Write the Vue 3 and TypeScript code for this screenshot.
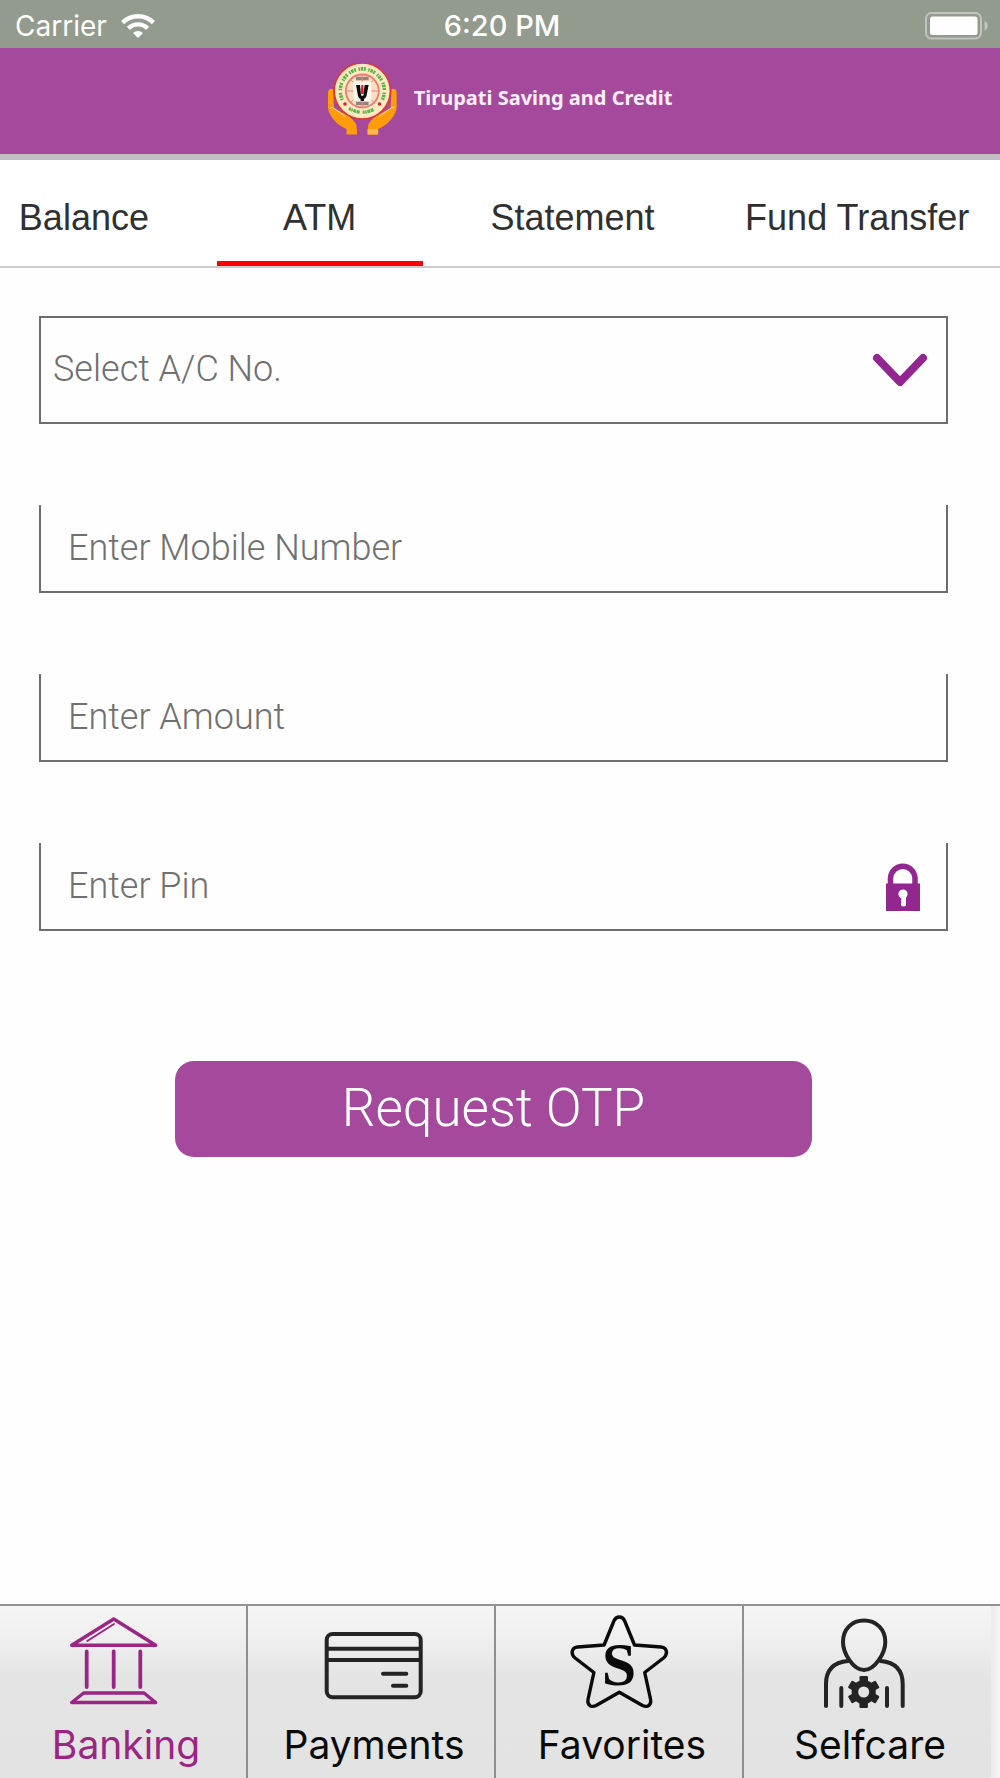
<script setup lang="ts">
import { ref } from 'vue'

type IconName = 'bank' | 'card' | 'star' | 'person'

interface NavItem {
  label: string
  icon: IconName
}

const tabs: string[] = ['Balance', 'ATM', 'Statement', 'Fund Transfer']
const activeTab = ref('ATM')

const navItems: NavItem[] = [
  { label: 'Banking', icon: 'bank' },
  { label: 'Payments', icon: 'card' },
  { label: 'Favorites', icon: 'star' },
  { label: 'Selfcare', icon: 'person' },
]
const activeNav = ref('Banking')

const account = ref('')
const mobile = ref('')
const amount = ref('')
const pin = ref('')

const gearTeeth: number[] = [0, 60, 120, 180, 240, 300]
</script>

<template>
  <div class="page">
    <div class="status">
      <div class="carrier">
        <span>Carrier</span>
        <svg width="34" height="24" viewBox="0 0 34 24" aria-hidden="true">
          <g fill="none" stroke="#fff" stroke-width="4.4">
            <path d="M1.6 8.6A21.8 21.8 0 0 1 32.4 8.6" />
            <path d="M7.4 14.4A13.5 13.5 0 0 1 26.6 14.4" />
          </g>
          <path d="M12 19A7 7 0 0 1 22 19L17 24Z" fill="#fff" />
        </svg>
      </div>
      <span class="time">6:20 PM</span>
      <svg class="battery" width="64" height="28" viewBox="0 0 64 28" aria-hidden="true">
        <rect x="1" y="1" width="55" height="25.5" rx="5.5" fill="none" stroke="#c0c4bd" stroke-width="2" />
        <rect x="5" y="4.5" width="47.5" height="18.5" rx="2.5" fill="#fff" />
        <path d="M59.5 9Q62.8 10.5 62.8 13.7Q62.8 17 59.5 18.5Z" fill="#c0c4bd" />
      </svg>
    </div>

    <header class="header">
      <svg width="70" height="72" viewBox="0 0 70 72" aria-hidden="true">
        <g fill="#ff9c0a">
          <path d="M0 29Q1 25 5 26L6 45L15 50Q25 55 28 61Q29 64 29 71.5H18.5V66Q11 63 6 57Q0 50 0 44Z" />
          <path d="M68.6 29Q67.6 25 63.6 26L62.6 45L53.6 50Q43.6 55 40.6 61Q39.6 64 39.6 71.5H50.1V66Q57.6 63 62.6 57Q68.6 50 68.6 44Z" />
        </g>
        <rect x="39.6" y="66" width="10.5" height="5.5" fill="#ffb64f" />
        <g fill="none" stroke="#ffd9a0" stroke-width="1">
          <path d="M2 45Q4 43 7 46L18 54" />
          <path d="M66.6 45Q64.6 43 61.6 46L50.6 54" />
        </g>
        <circle cx="34.3" cy="28" r="28" fill="#fce9c4" stroke="#e0382c" stroke-width="1.5" />
        <path
          d="M14.3 37A22 22 0 1 1 54.3 37"
          fill="none"
          stroke="#5cb548"
          stroke-width="3.6"
          stroke-dasharray="1.5 .8 2.5 .7 2 2.5"
        />
        <path d="M21 45.5Q34 53 47.5 45.5" fill="none" stroke="#5cb548" stroke-width="3.2" stroke-dasharray="2 .6 1.5 .6 3 .6 3 3" />
        <circle cx="17" cy="41" r="1.8" fill="#d8281f" />
        <circle cx="51.5" cy="41" r="1.8" fill="#d8281f" />
        <circle cx="34.3" cy="28" r="16.5" fill="#f9dfc0" stroke="#ee7b70" stroke-width="1.8" />
        <path d="M28 15.5H40.6M28 40.5H40.6" stroke="#8d8580" stroke-width="3.5" />
        <path d="M34.3 11V45M17 28H52M22 16L46.6 40M46.6 16L22 40" stroke="#ef8478" stroke-width="1" />
        <rect x="25.3" y="18.5" width="18" height="19.5" fill="#fff8ec" />
        <path d="M28 22H32L33 32Q34.3 34 35.6 32L36.6 22H40.6L38.5 33Q37 36 36 36V38H32.6V36Q31 36 30 33Z" fill="#0a0a0a" />
        <path d="M33.3 22H35.3L36 31H32.6Z" fill="#e8231d" />
      </svg>
      <span class="title">Tirupati Saving and Credit</span>
    </header>

    <nav class="tabs" aria-label="Banking services">
      <a
        v-for="tab in tabs"
        :key="tab"
        href="#"
        :class="['tab', { active: tab === activeTab }]"
        @click.prevent="activeTab = tab"
      >{{ tab }}</a>
    </nav>

    <form class="form" @submit.prevent>
      <div class="field">
        <select v-model="account" class="account" aria-label="Select A/C No.">
          <option value="">Select A/C No.</option>
        </select>
        <svg class="chevron" width="56" height="34" viewBox="0 0 56 34" aria-hidden="true">
          <path d="M5 5L28 29L51 5" fill="none" stroke="#92278f" stroke-width="8" stroke-linecap="round" stroke-linejoin="round" />
        </svg>
      </div>
      <div class="field">
        <input v-model="mobile" class="entry" type="tel" placeholder="Enter Mobile Number" aria-label="Enter Mobile Number" />
      </div>
      <div class="field">
        <input v-model="amount" class="entry" type="text" placeholder="Enter Amount" aria-label="Enter Amount" />
      </div>
      <div class="field">
        <input v-model="pin" class="entry" type="password" placeholder="Enter Pin" aria-label="Enter Pin" />
        <svg class="lock" width="34" height="50" viewBox="0 0 34 50" aria-hidden="true">
          <path d="M4.5 23V16A12.3 13 0 0 1 29 16V23" fill="none" stroke="#92278f" stroke-width="5.5" />
          <rect y="21.5" width="34" height="27.5" fill="#92278f" />
          <circle cx="17" cy="32" r="4.6" fill="#fff" />
          <path d="M15.5 33H20V43.5Q17.5 45.5 15 43.5Z" fill="#fff" />
        </svg>
      </div>
      <button class="submit" type="submit">Request OTP</button>
    </form>

    <nav class="bottom" aria-label="Main">
      <a
        v-for="item in navItems"
        :key="item.label"
        href="#"
        :class="['item', { current: item.label === activeNav }]"
        @click.prevent="activeNav = item.label"
      >
        <svg width="120" height="100" viewBox="0 0 120 100" fill="none" stroke-linecap="round" stroke-linejoin="round" aria-hidden="true">
          <g v-if="item.icon === 'bank'" stroke="#9b2583" stroke-width="3.4">
            <path d="M5.7 35.3L47.7 9L89.7 35.3Z" />
            <path d="M21.3 31L48 14" stroke-width="2" />
            <path d="M20.7 41.5V77M47.7 41.5V77M74.3 41.5V77" stroke-width="3.8" />
            <path d="M5.7 92.5L17.7 83H78L89.7 92.5Z" />
          </g>
          <g v-else-if="item.icon === 'card'" stroke="#242424" stroke-width="4">
            <rect x="12.7" y="24" width="94" height="63.3" rx="6" />
            <path d="M13 38.7H106M13 50H106M69 63.7H92.3M79 75.7H92.3" />
          </g>
          <g v-else-if="item.icon === 'star'" stroke="#0a0a0a" stroke-width="3.4">
            <path d="M57.3 7Q61 7 62.7 11L72.5 35L99 37Q104 37.5 104.5 42Q104.5 45.5 101.5 48L82.7 62.5L88.5 89Q89.5 94 86 96Q83.5 97 80.5 95.5L57.3 82.3L34.1 95.5Q31.1 97 28.6 96Q25.1 94 26.1 89L31.9 62.5L13.1 48Q10.1 45.5 10.1 42Q10.6 37.5 15.6 37L42.1 35L51.9 11Q53.6 7 57.3 7Z" />
            <text x="57" y="75" class="star-letter">S</text>
          </g>
          <g v-else stroke="#242424" stroke-width="4">
            <path d="M54 10.5C66 10.5 75.3 19 75.3 32C75.3 43 65 60 54 60C43 60 33 43 33 32C33 19 42 10.5 54 10.5Z" />
            <path d="M16 96V74Q16 53 38 51M92.7 96V74Q92.7 53 70.5 51M31.3 78V96M77 78V96" />
            <g fill="#242424" stroke="none">
              <rect v-for="angle in gearTeeth" :key="angle" x="49.5" y="66" width="8.5" height="8" rx="1.2" :transform="`rotate(${angle} 53.7 82)`" />
            </g>
            <circle cx="53.7" cy="82" r="8.8" stroke-width="6.5" />
          </g>
        </svg>
        <span class="label">{{ item.label }}</span>
      </a>
    </nav>
  </div>
</template>

<style>
body {
  margin: 0;
  background: #fefefe;
}
</style>

<style scoped>
.page {
  display: flex;
  flex-direction: column;
  min-height: 100vh;
  box-sizing: border-box;
}

.page * {
  box-sizing: border-box;
}

a {
  color: inherit;
  text-decoration: none;
}

svg {
  display: block;
  flex: none;
}

.status {
  display: grid;
  grid-template-columns: 1fr auto 1fr;
  align-items: center;
  height: 48px;
  padding: 3px 11px 0 15px;
  background: #939a8e;
  color: #fff;
  font: 400 28px/36px Inter, sans-serif;
}

.carrier {
  display: flex;
  align-items: center;
  gap: 14px;
}

.time {
  font-size: 29px;
  font-weight: 500;
}

.battery {
  justify-self: end;
}

.header {
  display: flex;
  align-items: center;
  justify-content: center;
  gap: 16px;
  height: 112px;
  padding-bottom: 4px;
  background: #a4499c;
  border-bottom: 6px solid #c1bdc1;
}

.title {
  padding-bottom: 2px;
  color: #fbeefa;
  font: 700 20px/28px "Noto Sans", "Open Sans", sans-serif;
}

.tabs {
  display: grid;
  grid-template-columns: 168fr 206fr 202fr 270fr;
  column-gap: 49px;
  height: 108px;
  padding-right: 8px;
  background: #fff;
  border-bottom: 2px solid #ccc;
}

.tab {
  display: flex;
  align-items: center;
  justify-content: center;
  padding-top: 14px;
  border-bottom: 5px solid transparent;
  color: #303030;
  font: 400 36px/42px "Liberation Sans", Arial, sans-serif;
  white-space: nowrap;
}

.tab.active {
  border-bottom-color: #f00;
}

.form {
  display: flex;
  flex-direction: column;
  gap: 81px;
  padding: 48px 52px 64px 39px;
}

.field {
  display: grid;
  align-items: center;
}

.field > * {
  grid-area: 1 / 1;
}

.account,
.entry {
  width: 100%;
  margin: 0;
  border: 2px solid #6d6d6d;
  border-radius: 0;
  outline: none;
  appearance: none;
  background: transparent;
  color: #707070;
  font: 300 36px/44px Roboto, sans-serif;
}

.account {
  height: 108px;
  padding: 0 96px 2px 12px;
}

.entry {
  height: 88px;
  padding: 0 80px 1px 27px;
  border-top: 0;
}

.entry::placeholder {
  color: #707070;
  opacity: 1;
}

.chevron,
.lock {
  justify-self: end;
  pointer-events: none;
}

.chevron {
  margin-right: 20px;
}

.lock {
  margin-right: 28px;
}

.submit {
  align-self: center;
  width: 70%;
  height: 96px;
  margin-top: 49px;
  padding: 0 0 2px;
  border: 0;
  border-radius: 19px;
  background: #a4499c;
  color: #fff;
  font: 300 53px/64px Roboto, sans-serif;
}

.bottom {
  display: grid;
  grid-template-columns: 31fr 31fr 31fr 32fr;
  margin-top: auto;
  border-top: 2px solid #939393;
  background:
    linear-gradient(to right, #ececec, #f4f4f4) right / 9px 100% no-repeat,
    linear-gradient(#f5f5f5, #f1f1f1 14%, #e4e4e4 42%, #e3e3e3);
}

.item {
  display: flex;
  flex-direction: column;
  align-items: center;
  padding: 4px 0 9px 6px;
  border-right: 2px solid #8f8f8f;
  color: #0a0a0a;
}

.item:last-child {
  padding-right: 8px;
  border-right-color: transparent;
}

.item.current {
  color: #9b2583;
}

.label {
  margin-top: 11px;
  font: 400 39px/48px Inter, sans-serif;
}

.star-letter {
  fill: #0a0a0a;
  stroke: none;
  font: 700 62px "Liberation Serif", "Times New Roman", serif;
  text-anchor: middle;
}
</style>
